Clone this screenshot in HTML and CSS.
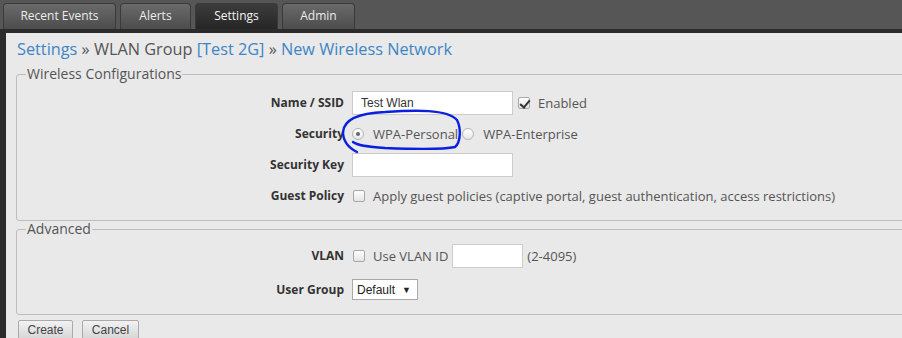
FILE: index.html
```html
<!DOCTYPE html>
<html lang="en">
<head>
    <meta charset="UTF-8">
    <title>New Wireless Network</title>
    <link rel="stylesheet" href="styles.css">
</head>
<body>
    <nav class="topbar">
        <a class="tab">Recent Events</a>
        <a class="tab">Alerts</a>
        <a class="tab active">Settings</a>
        <a class="tab">Admin</a>
    </nav>

    <div class="main">
        <h2 class="crumbs">
            <a>Settings</a> <span class="sep">&raquo;</span> WLAN Group <a>[Test 2G]</a> <span class="sep">&raquo;</span> <a>New Wireless Network</a>
        </h2>

        <fieldset class="group">
            <legend>Wireless Configurations</legend>
            <div class="row">
                <label class="lbl">Name / SSID</label>
                <div class="ctl">
                    <input class="txt" type="text" value="Test Wlan">
                    <span class="check on"></span>
                    <span class="opt">Enabled</span>
                </div>
            </div>
            <div class="row">
                <label class="lbl">Security</label>
                <div class="ctl">
                    <span class="radio on"></span>
                    <span class="opt">WPA-Personal</span>
                    <span class="radio"></span>
                    <span class="opt">WPA-Enterprise</span>
                </div>
            </div>
            <div class="row">
                <label class="lbl">Security Key</label>
                <div class="ctl">
                    <input class="txt" type="text">
                </div>
            </div>
            <div class="row">
                <label class="lbl">Guest Policy</label>
                <div class="ctl">
                    <span class="check"></span>
                    <span class="opt">Apply guest policies (captive portal, guest authentication, access restrictions)</span>
                </div>
            </div>
        </fieldset>

        <fieldset class="group adv">
            <legend>Advanced</legend>
            <div class="row">
                <label class="lbl">VLAN</label>
                <div class="ctl">
                    <span class="check"></span>
                    <span class="opt">Use VLAN ID</span>
                    <input class="txt small" type="text">
                    <span class="hint">(2-4095)</span>
                </div>
            </div>
            <div class="row">
                <label class="lbl">User Group</label>
                <div class="ctl">
                    <span class="select">Default <span class="arrow">&#9660;</span></span>
                </div>
            </div>
        </fieldset>

        <div class="actions">
            <button class="btn">Create</button>
            <button class="btn">Cancel</button>
        </div>
    </div>

    <!-- hand drawn mark around the WPA-Personal option -->
    <svg class="scribble" width="902" height="338" viewBox="0 0 902 338">
        <path d="M357,152 C349,148 343,141 343,132 C344,119 360,113 385,112 C415,110 447,109 457,120 C461,128 461,142 455,147 C442,150 410,149 385,148 C370,147 358,146 353,142" fill="none" stroke="#0a1fe0" stroke-width="2.4" stroke-linecap="round"/>
    </svg>
</body>
</html>
```

FILE: styles.css
```css
* {
    box-sizing: border-box;
}

body {
    margin: 0;
    background: #2b2b2b;
    font-family: 'Open Sans', 'DejaVu Sans', sans-serif;
    color: #444;
    height: 338px;
    overflow: hidden;
    position: relative;
}

.topbar {
    display: flex;
    gap: 4px;
    height: 33px;
    padding: 3px 0 0 3px;
    background: #565656;
    border-bottom: 4px solid #2b2b2b;
}

.tab {
    height: 26px;
    line-height: 23px;
    text-align: center;
    font-size: 12px;
    color: #ececec;
    background: linear-gradient(#6a6a6a, #4c4c4c);
    border: 1px solid #3a3a3a;
    border-bottom: none;
    border-radius: 4px 4px 0 0;
    width: 113px;
}

.tab:nth-child(2) { width: 71px; }
.tab:nth-child(3) { width: 83px; }
.tab:nth-child(4) { width: 73px; }

.tab.active {
    background: linear-gradient(#3c3c3c, #262626);
    color: #f4f4f4;
}

.main {
    margin-left: 6px;
    height: 305px;
    background: #e9e9e9;
    padding: 4px 0 0 10px;
    overflow: hidden;
}

.crumbs {
    margin: 0 0 4px 1px;
    font-size: 16.3px;
    font-weight: normal;
    color: #555;
    line-height: 25px;
}

.crumbs a {
    color: #3d85c6;
}

.crumbs .sep {
    color: #555;
}

.group {
    margin: 0;
    width: calc(100% + 30px);
    border: 1px solid #bdbdbd;
    border-radius: 3px;
    padding: 5px 0 9px 0;
}

.group legend {
    padding: 0 1px;
    margin-left: 9px;
    font-size: 14px;
    color: #555;
    line-height: 16px;
}

.adv {
    margin-top: 0;
    padding-top: 3px;
    padding-bottom: 9px;
}

.row {
    display: grid;
    grid-template-columns: 335px auto;
    align-items: center;
    height: 31px;
}

.adv .row + .row {
    margin-top: 3px;
}

.lbl {
    text-align: right;
    font-weight: bold;
    font-size: 12px;
    color: #333;
    padding-right: 8px;
}

.ctl {
    display: flex;
    align-items: center;
    font-size: 13px;
}

.opt {
    margin-left: 8px;
    margin-right: 4px;
    color: #555;
}

.hint {
    color: #555;
}

.txt {
    width: 161px;
    height: 24px;
    border: 1px solid #cccccc;
    background: #fff;
    font-family: 'Liberation Sans', Arial, sans-serif;
    font-size: 12px;
    padding: 2px 8px;
    color: #333;
    margin: 0 4px 0 0;
}

.txt.small {
    width: 71px;
    margin-left: 0;
}

.check {
    width: 12px;
    height: 12px;
    margin-left: 1px;
    border: 1px solid #a8a8a8;
    border-radius: 2px;
    background: linear-gradient(#fff, #e4e4e4);
    position: relative;
}

.check.on::after {
    content: '';
    position: absolute;
    left: 3px;
    top: 0;
    width: 4px;
    height: 8px;
    border: solid #333;
    border-width: 0 2px 2px 0;
    transform: rotate(40deg);
}

.radio {
    width: 12px;
    height: 12px;
    border: 1px solid #b5b5b5;
    border-radius: 50%;
    background: linear-gradient(#fff, #e8e8e8);
    position: relative;
}

.radio.on::after {
    content: '';
    position: absolute;
    left: 3px;
    top: 3px;
    width: 4px;
    height: 4px;
    border-radius: 50%;
    background: #666;
}

.radio + .opt {
    margin-left: 9px;
}

.select {
    display: inline-flex;
    align-items: center;
    justify-content: space-between;
    width: 66px;
    height: 21px;
    border: 1px solid #a9a9a9;
    background: #fff;
    font-family: 'Liberation Sans', Arial, sans-serif;
    font-size: 12px;
    color: #222;
    padding: 0 6px 0 4px;
}

.arrow {
    font-size: 9px;
}

.actions {
    display: flex;
    gap: 9px;
    margin-top: 5px;
    padding-left: 2px;
}

.btn {
    height: 20px;
    width: 55px;
    padding: 0;
    font-family: 'Liberation Sans', Arial, sans-serif;
    font-size: 12px;
    color: #444;
    border: 1px solid #aaa;
    border-radius: 2px;
    background: linear-gradient(#f2f2f2, #d6d6d6);
}

.btn + .btn {
    width: 57px;
}

.scribble {
    position: absolute;
    left: 0;
    top: 0;
    pointer-events: none;
}
```
